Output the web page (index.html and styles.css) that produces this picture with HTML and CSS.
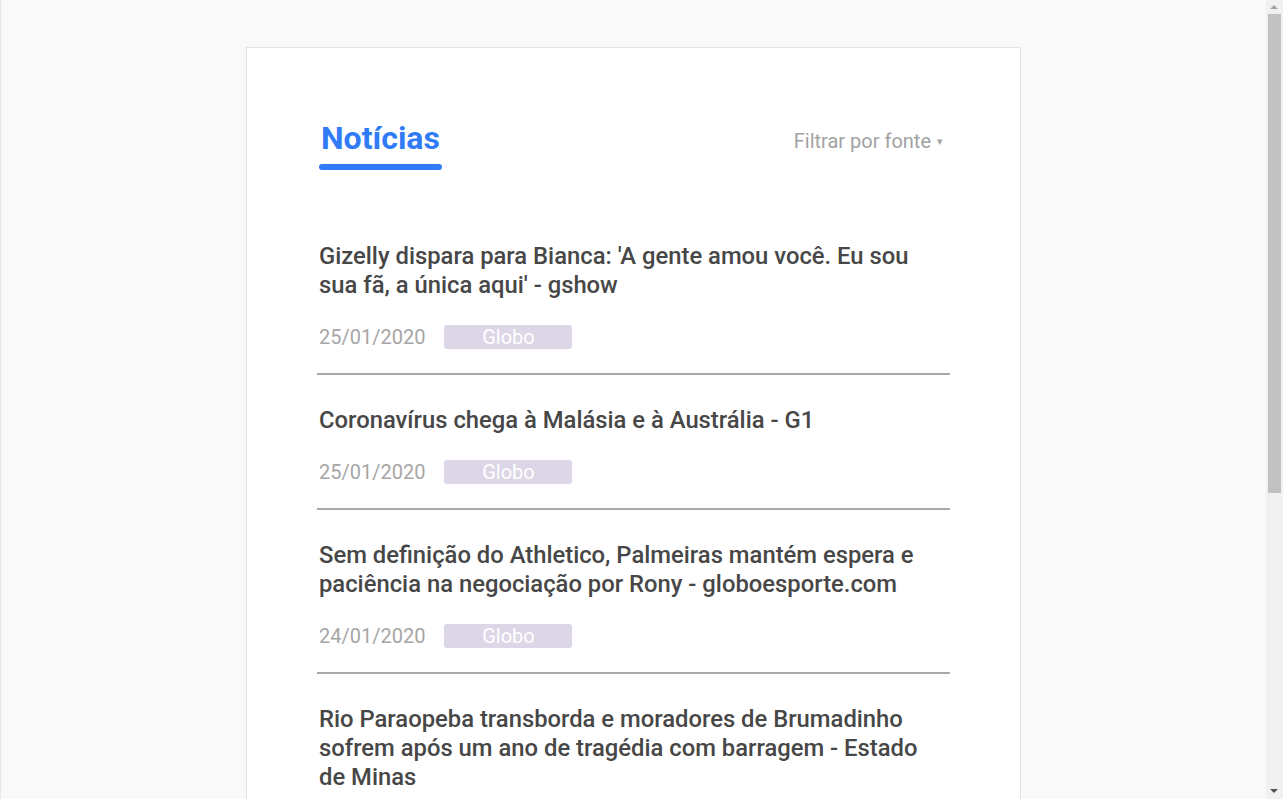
FILE: index.html
```html
<!DOCTYPE html>
<html lang="pt-BR">
<head>
<meta charset="utf-8">
<title>Notícias</title>
<link rel="stylesheet" href="styles.css">
</head>
<body>
<main class="card">
  <header class="header">
    <h1 class="tab">Notícias</h1>
    <button class="filter">Filtrar por fonte <span class="caret">&#9662;</span></button>
  </header>
  <ul class="news">
    <li class="item">
      <h2 class="headline">Gizelly dispara para Bianca: 'A gente amou você. Eu sou sua fã, a única aqui' - gshow</h2>
      <div class="meta"><span class="date">25/01/2020</span><span class="source">Globo</span></div>
    </li>
    <li class="item">
      <h2 class="headline">Coronavírus chega à Malásia e à Austrália - G1</h2>
      <div class="meta"><span class="date">25/01/2020</span><span class="source">Globo</span></div>
    </li>
    <li class="item">
      <h2 class="headline">Sem definição do Athletico, Palmeiras mantém espera e paciência na negociação por Rony - globoesporte.com</h2>
      <div class="meta"><span class="date">24/01/2020</span><span class="source">Globo</span></div>
    </li>
    <li class="item">
      <h2 class="headline">Rio Paraopeba transborda e moradores de Brumadinho sofrem após um ano de tragédia com barragem - Estado de Minas</h2>
      <div class="meta"><span class="date">24/01/2020</span><span class="source">Globo</span></div>
    </li>
    <li class="item">
      <h2 class="headline">Chuva forte provoca alagamentos e deixa cidades em alerta no Sudeste - G1</h2>
      <div class="meta"><span class="date">24/01/2020</span><span class="source">Globo</span></div>
    </li>
    <li class="item">
      <h2 class="headline">Flamengo se reapresenta e inicia preparação para a temporada - globoesporte.com</h2>
      <div class="meta"><span class="date">24/01/2020</span><span class="source">Globo</span></div>
    </li>
  </ul>
</main>
<div class="scrollbar" aria-hidden="true">
  <div class="sb-arrow sb-up"></div>
  <div class="sb-track"><div class="sb-thumb"></div></div>
  <div class="sb-arrow sb-down"></div>
</div>
</body>
</html>
```

FILE: styles.css
```css
html {
  background: linear-gradient(to right, #e6e6e6 1px, #f9f9f9 1px);
}

body {
  margin: 0;
  padding: 47px 16px 47px 0;
  font-family: Roboto, "Liberation Sans", Arial, sans-serif;
}

.card {
  width: 633px;
  margin: 0 auto;
  padding: 71px 70px 40px;
  background: #ffffff;
  border: 1px solid #e3e3e3;
}

.header {
  display: flex;
  justify-content: space-between;
  align-items: flex-start;
}

.tab {
  margin: 0 0 0 2px;
  padding: 0 2px;
  font-family: Roboto, "Liberation Sans", Arial, sans-serif;
  font-size: 32px;
  font-weight: 700;
  line-height: 38px;
  color: #2f7cf6;
  display: flex;
  flex-direction: column;
  gap: 7px;
}

.tab::after {
  content: "";
  display: block;
  height: 6px;
  margin: 0 -2px;
  border-radius: 3px;
  background: #2f7cf6;
}

.filter {
  margin: 10px 7px 0 0;
  padding: 0;
  border: 0;
  background: none;
  font-family: Roboto, "Liberation Sans", Arial, sans-serif;
  font-size: 20px;
  line-height: 24px;
  color: #a2a2a2;
  display: flex;
  align-items: center;
  gap: 6px;
}

.caret {
  font-size: 11px;
  line-height: 11px;
  color: #a2a2a2;
}

.news {
  list-style: none;
  margin: 41px 0 0;
  padding: 0;
}

.item {
  padding: 31px 6px 24px 2px;
  border-bottom: 2px solid #a8a8a8;
}

.headline {
  margin: 0;
  font-size: 23.8px;
  font-weight: 500;
  line-height: 29px;
  color: #474747;
}

.meta {
  margin-top: 25px;
  display: flex;
  align-items: center;
  gap: 19px;
  height: 24px;
}

.date {
  font-size: 20px;
  line-height: 24px;
  color: #a6a6a6;
}

.source {
  width: 128px;
  height: 24px;
  border-radius: 3px;
  background: #dcd6e6;
  color: #ffffff;
  font-size: 20px;
  line-height: 24px;
  text-align: center;
}

.scrollbar {
  position: fixed;
  top: 0;
  right: 0;
  bottom: 0;
  width: 17px;
  background: #f1f1f1;
  display: flex;
  flex-direction: column;
}

.sb-arrow {
  height: 14px;
  flex: none;
  position: relative;
}

.sb-arrow::before {
  content: "";
  position: absolute;
  left: 4px;
  width: 0;
  height: 0;
  border-left: 4px solid transparent;
  border-right: 4px solid transparent;
}

.sb-up::before {
  top: 5px;
  border-bottom: 4px solid #a3a3a3;
}

.sb-down::before {
  top: 4px;
  border-top: 4px solid #505050;
}

.sb-track {
  flex: 1;
  padding: 0 2px;
}

.sb-thumb {
  height: 479px;
  background: #c1c1c1;
}
```
